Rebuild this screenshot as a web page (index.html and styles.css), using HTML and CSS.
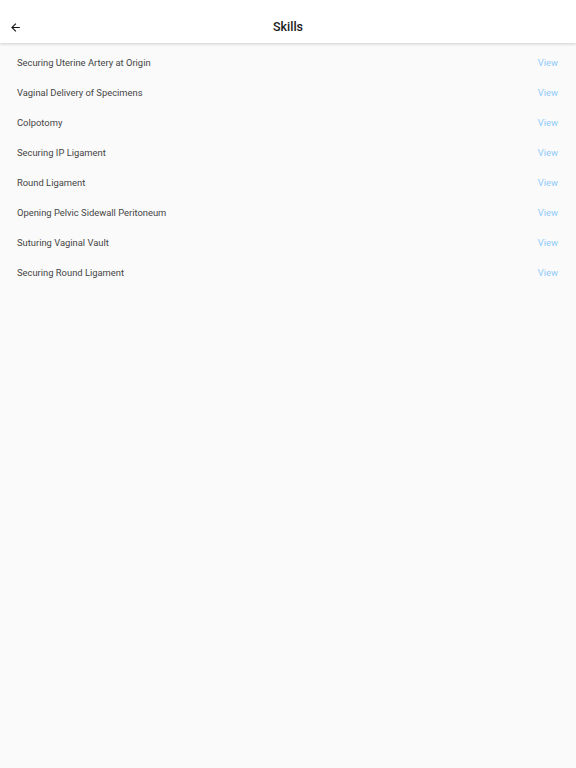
FILE: index.html
```html
<!DOCTYPE html>
<html>
<head>
<meta charset="utf-8">
<link rel="stylesheet" href="styles.css">
</head>
<body>
<header class="topbar">
  <button class="back" aria-label="Back">
    <svg width="13" height="13" viewBox="0 0 24 24"><path d="M20 11H7.83l5.59-5.59L12 4l-8 8 8 8 1.41-1.41L7.83 13H20v-2z" fill="#111"/></svg>
  </button>
  <h1 class="title">Skills</h1>
</header>
<main class="list">
  <div class="row"><span class="name">Securing Uterine Artery at Origin</span><a class="view">View</a></div>
  <div class="row"><span class="name">Vaginal Delivery of Specimens</span><a class="view">View</a></div>
  <div class="row"><span class="name">Colpotomy</span><a class="view">View</a></div>
  <div class="row"><span class="name">Securing IP Ligament</span><a class="view">View</a></div>
  <div class="row"><span class="name">Round Ligament</span><a class="view">View</a></div>
  <div class="row"><span class="name">Opening Pelvic Sidewall Peritoneum</span><a class="view">View</a></div>
  <div class="row"><span class="name">Suturing Vaginal Vault</span><a class="view">View</a></div>
  <div class="row"><span class="name">Securing Round Ligament</span><a class="view">View</a></div>
</main>
</body>
</html>
```
FILE: styles.css
```css
html, body {
  margin: 0;
  padding: 0;
  background: #fafafa;
  font-family: Roboto, "Noto Sans", sans-serif;
  height: 100%;
}
.topbar {
  position: relative;
  height: 43px;
  background: #fff;
  display: flex;
  align-items: center;
  justify-content: center;
  box-shadow: 0 1px 3px rgba(0,0,0,0.18);
  z-index: 1;
}
.back {
  position: absolute;
  left: 9px;
  top: 21px;
  border: 0;
  background: none;
  padding: 0;
  width: 13px;
  height: 13px;
  display: flex;
}
.title {
  margin: 0;
  font-size: 12.5px;
  font-weight: 500;
  color: #1a1a1a;
  line-height: 1;
  padding-top: 12px;
}
.list {
  padding: 4px 18px 0 17px;
}
.row {
  height: 30px;
  display: flex;
  align-items: center;
  justify-content: space-between;
  font-size: 9.4px;
}
.name {
  color: #454545;
}
.view {
  color: #90caf9;
}
```
